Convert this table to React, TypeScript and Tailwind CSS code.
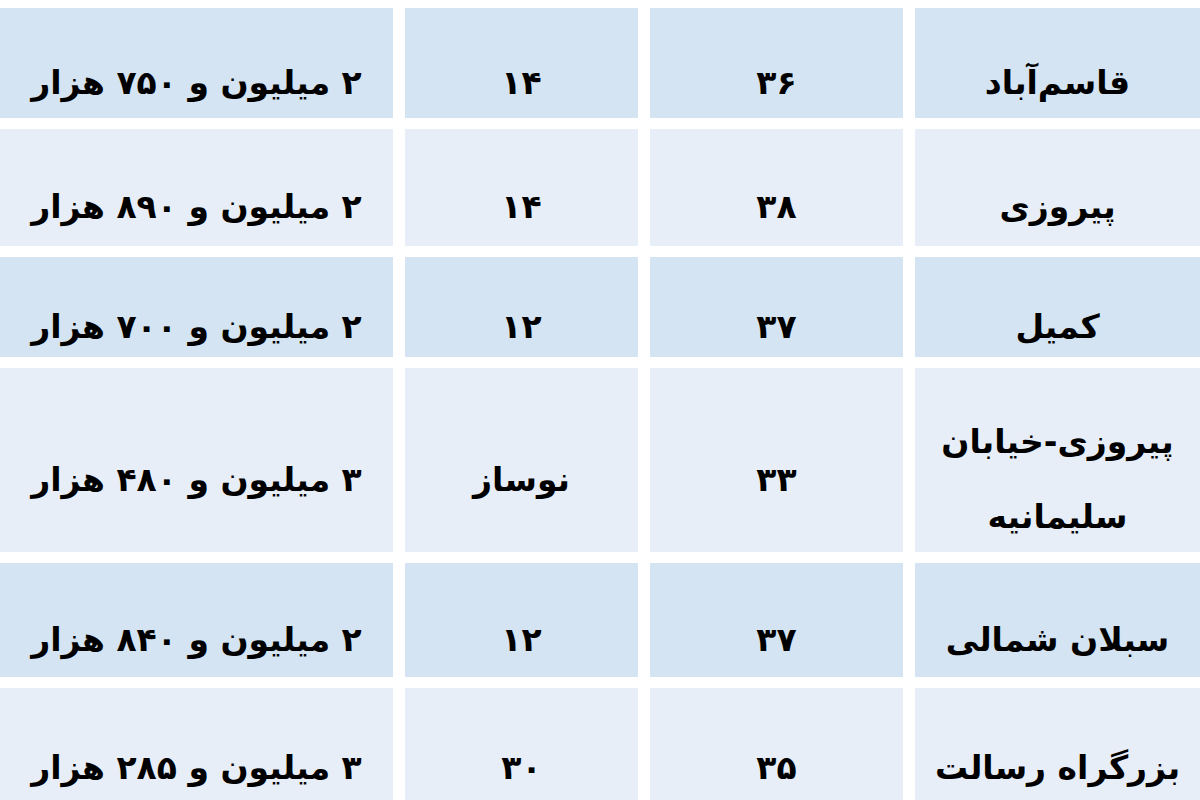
const rows = [
  { price: "۲ میلیون و ۷۵۰ هزار", age: "۱۴", area: "۳۶", name: ["قاسم‌آباد"], h: "h-[110px]", dark: true },
  { price: "۲ میلیون و ۸۹۰ هزار", age: "۱۴", area: "۳۸", name: ["پیروزی"], h: "h-[117px]", dark: false },
  { price: "۲ میلیون و ۷۰۰ هزار", age: "۱۲", area: "۳۷", name: ["کمیل"], h: "h-[100px]", dark: true },
  { price: "۳ میلیون و ۴۸۰ هزار", age: "نوساز", area: "۳۳", name: ["پیروزی-خیابان", "سلیمانیه"], h: "h-[184px]", dark: false },
  { price: "۲ میلیون و ۸۴۰ هزار", age: "۱۲", area: "۳۷", name: ["سبلان شمالی"], h: "h-[114px]", dark: true },
  { price: "۳ میلیون و ۲۸۵ هزار", age: "۳۰", area: "۳۵", name: ["بزرگراه رسالت"], h: "h-[120px]", dark: false },
];

const Cell = ({ lines, dark }: { lines: string[]; dark: boolean }) => (
  <div
    className={`flex flex-col items-center justify-center overflow-hidden whitespace-nowrap pt-[38px] text-center text-[33px] font-bold text-black ${
      lines.length > 1 ? "leading-[75px]" : "leading-none"
    } ${dark ? "bg-[#d4e4f3]" : "bg-[#e8eef8]"}`}
  >
    {lines.map((l, i) => (
      <span key={i}>{l}</span>
    ))}
  </div>
);

export default function App() {
  return (
    <div
      dir="rtl"
      className="h-[800px] w-[1200px] overflow-hidden bg-white pt-[8px]"
      style={{ fontFamily: '"DejaVu Sans", sans-serif' }}
    >
      <div className="flex flex-col gap-y-[11px]">
        {rows.map((r, i) => (
          <div key={i} className={`grid grid-cols-[285px_253px_233px_393px] gap-x-[12px] ${r.h}`}>
            <Cell lines={r.name} dark={r.dark} />
            <Cell lines={[r.area]} dark={r.dark} />
            <Cell lines={[r.age]} dark={r.dark} />
            <Cell lines={[r.price]} dark={r.dark} />
          </div>
        ))}
      </div>
    </div>
  );
}
